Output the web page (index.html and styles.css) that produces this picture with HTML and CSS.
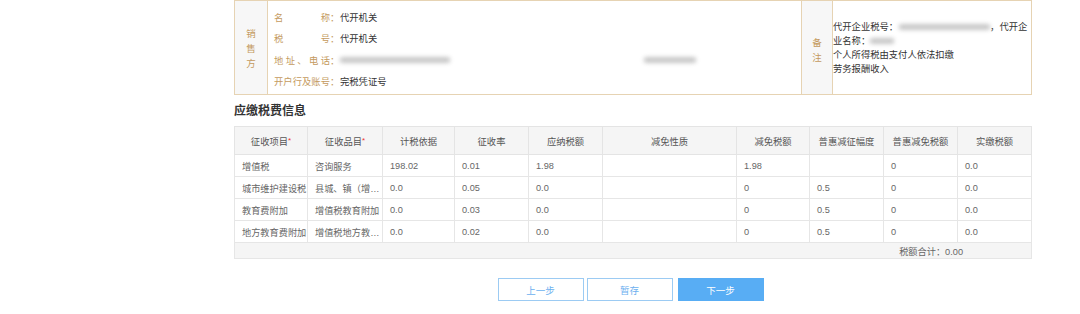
FILE: index.html
```html
<!DOCTYPE html>
<html lang="zh-CN">
<head>
<meta charset="utf-8">
<link rel="stylesheet" href="styles.css">
</head>
<body>
<div class="page">
  <div class="seller">
    <div class="side-label"><span>销</span><span>售</span><span>方</span></div>
    <div class="seller-main">
      <div class="srow"><span class="lab">名称</span><span class="colon">：</span><span class="val">代开机关</span></div>
      <div class="srow"><span class="lab">税号</span><span class="colon">：</span><span class="val">代开机关</span></div>
      <div class="srow"><span class="lab">地址、电话</span><span class="colon">：</span><span class="blur addr"></span><span class="spacer"></span><span class="blur phone"></span></div>
      <div class="srow"><span class="lab">开户行及账号</span><span class="colon">：</span><span class="val">完税凭证号</span></div>
    </div>
    <div class="side-label note-label"><span>备</span><span>注</span></div>
    <div class="note">代开企业税号：<span class="blur b1"></span>，代开企业名称：<span class="blur b2"></span><br>个人所得税由支付人依法扣缴<br>劳务报酬收入</div>
  </div>

  <h2 class="title">应缴税费信息</h2>

  <table class="tax">
    <colgroup>
      <col style="width:73px"><col style="width:75px"><col style="width:72px"><col style="width:74px"><col style="width:74px"><col style="width:134px"><col style="width:73px"><col style="width:74px"><col style="width:74px"><col style="width:74px">
    </colgroup>
    <thead>
      <tr>
        <th>征收项目<i class="req">*</i></th><th>征收品目<i class="req">*</i></th><th>计税依据</th><th>征收率</th><th>应纳税额</th><th>减免性质</th><th>减免税额</th><th>普惠减征幅度</th><th>普惠减免税额</th><th>实缴税额</th>
      </tr>
    </thead>
    <tbody>
      <tr><td>增值税</td><td>咨询服务</td><td>198.02</td><td>0.01</td><td>1.98</td><td></td><td>1.98</td><td></td><td>0</td><td>0.0</td></tr>
      <tr><td>城市维护建设税</td><td>县城、镇（增值税附加）</td><td>0.0</td><td>0.05</td><td>0.0</td><td></td><td>0</td><td>0.5</td><td>0</td><td>0.0</td></tr>
      <tr><td>教育费附加</td><td>增值税教育附加</td><td>0.0</td><td>0.03</td><td>0.0</td><td></td><td>0</td><td>0.5</td><td>0</td><td>0.0</td></tr>
      <tr><td>地方教育费附加</td><td>增值税地方教育附加</td><td>0.0</td><td>0.02</td><td>0.0</td><td></td><td>0</td><td>0.5</td><td>0</td><td>0.0</td></tr>
    </tbody>
    <tfoot>
      <tr><td colspan="10" class="total">税额合计：0.00</td></tr>
    </tfoot>
  </table>

  <div class="actions">
    <button class="btn">上一步</button>
    <button class="btn">暂存</button>
    <button class="btn primary">下一步</button>
  </div>
</div>
</body>
</html>
```

FILE: styles.css
```css
* { box-sizing: border-box; }
html, body { margin: 0; padding: 0; background: #fff; }
body {
  font-family: "Liberation Sans", "Noto Sans CJK SC", sans-serif;
  font-size: 9.3px;
  color: #333;
}
.page {
  width: 798px;
  margin-left: 234px;
}
.seller {
  display: flex;
  height: 95px;
  border: 1px solid #e6d3b3;
}
.side-label {
  width: 33px;
  flex: none;
  background: #f7f7f7;
  border-right: 1px solid #e6d3b3;
  color: #c49a5e;
  display: flex;
  flex-direction: column;
  align-items: center;
  justify-content: center;
  line-height: 15px;
  font-size: 9.5px;
  padding-top: 2px;
}
.note-label {
  width: 31px;
  padding-top: 4px;
}
.seller-main {
  flex: 1;
  border-right: 1px solid #e6d3b3;
  padding: 5px 0 0 6px;
}
.srow {
  display: flex;
  align-items: center;
  height: 21.5px;
  white-space: nowrap;
}
.lab {
  width: 56px;
  color: #c49a5e;
  text-align: justify;
  text-align-last: justify;
  white-space: nowrap;
}
.colon { color: #c49a5e; width: 10px; }
.val { color: #333; }
.blur {
  background: #c8c8c8;
  filter: blur(2px);
  height: 6px;
  display: inline-block;
  border-radius: 2px;
}
.addr { width: 110px; flex: none; }
.spacer { width: 194px; flex: none; }
.phone { width: 52px; flex: none; }
.note {
  width: 198px;
  flex: none;
  line-height: 14px;
  padding-top: 19px;
  color: #333;
}
.note .blur { vertical-align: middle; margin-top: -2px; }
.b1 { width: 91px; margin-left: 1px; }
.b2 { width: 24px; }
.title {
  margin: 0;
  height: 31px;
  line-height: 31px;
  padding-top: 1px;
  font-size: 12px;
  font-weight: bold;
  color: #333;
}
.tax {
  width: 798px;
  border-collapse: collapse;
  table-layout: fixed;
  border: 1px solid #dedede;
  font-size: 9.2px;
}
.tax th {
  height: 28px;
  background: #f5f5f5;
  color: #555;
  font-weight: normal;
  text-align: center;
  border: 1px solid #e4e4e4;
  padding: 0 2px;
  font-size: 9.3px;
}
.req { color: #e33; font-style: normal; font-size: 8px; vertical-align: 2px; }
.tax td {
  height: 22px;
  border: 1px solid #e6e6e6;
  padding: 0 2px 0 7px;
  color: #666;
  white-space: nowrap;
  overflow: hidden;
  text-overflow: ellipsis;
}
.tax tbody td:first-child { padding-left: 7px; padding-right: 0; text-overflow: clip; }
.tax tfoot td.total {
  height: 16px;
  background: #f5f5f5;
  text-align: right;
  padding-right: 68px;
  color: #666;
}
.actions {
  display: flex;
  justify-content: center;
  gap: 3px;
  margin-top: 19px;
  padding-right: 5px;
}
.btn {
  width: 86px;
  height: 23px;
  border: 1px solid #9ccbf3;
  background: #fff;
  color: #6cb0ef;
  font-family: "Liberation Sans", "Noto Sans CJK SC", sans-serif;
  font-size: 9.5px;
  padding: 0;
}
.btn.primary {
  background: #58adf4;
  border-color: #58adf4;
  color: #fff;
  margin-left: 2px;
}
```
